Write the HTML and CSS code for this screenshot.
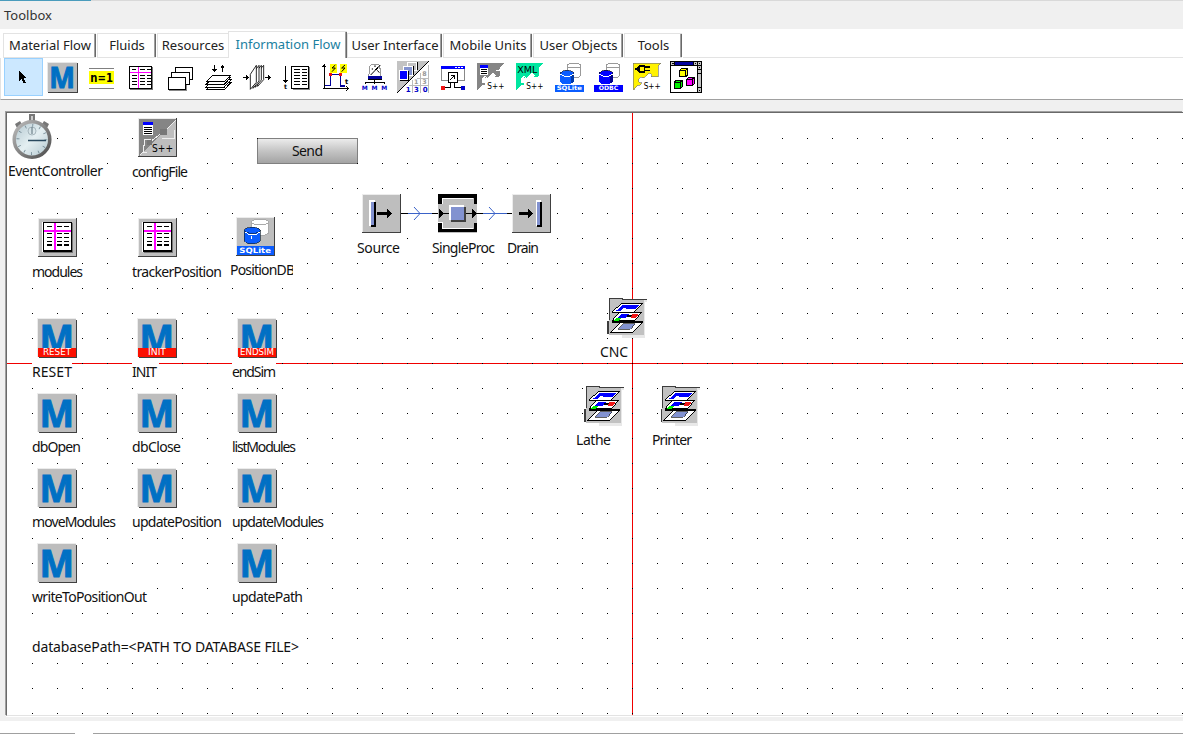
FILE: index.html
```html
<!DOCTYPE html>
<html lang="en">
<head>
<meta charset="utf-8">
<title>Toolbox</title>
<link rel="stylesheet" href="styles.css">
</head>
<body>
<div class="app">
<header class="title">Toolbox</header>
<nav class="tabs">
<div class="tab w93">Material Flow</div><div class="tab w59">Fluids</div><div class="tab w71">Resources</div><div class="tab active">Information Flow</div><div class="tab w95">User Interface</div><div class="tab w89">Mobile Units</div><div class="tab w90">User Objects</div><div class="tab w58">Tools</div><div class="tabfill"></div>
</nav>
<div class="toolbar">
<svg class="tool selected" viewBox="12 174 117 114"><path d="M57 210V243L64 237L71 251L77 248L71 234H80Z"/></svg>
<svg class="tool" viewBox="129 174 117 114"><path fill="#404040" d="M144 189H235V279H144Z"/><path fill="#e8e8e8" d="M141 186H231V276H141Z"/><path fill="#bdbdbd" d="M144 189H231V276H144Z"/><text class="m wide" x="148" y="263" font-size="88" textLength="77" lengthAdjust="spacingAndGlyphs">M</text></svg>
<svg class="tool" viewBox="246 174 117 114"><path fill="#ff0" d="M267 213H342V252H267Z"/><path fill="#808080" d="M267 204H342V207H267ZM267 264H342V267H267Z"/><text class="b" x="271" y="246" font-size="38" textLength="68" lengthAdjust="spacingAndGlyphs">n=1</text></svg>
<svg class="tool" viewBox="363 174 117 114"><path fill="#777" d="M390 201H459V270H390Z"/><path d="M387 198H456V267H387Z"/><path fill="#fff" d="M390 201H453V264H390Z"/><path stroke="#f0f" stroke-width="3" d="M390 217H453M415 201V264"/><path stroke="#000" stroke-width="3" stroke-dasharray="14 6" d="M396 208H408M420 208H452M396 226H410M420 226H452M396 235H410M420 235H452M396 244H410M420 244H452M396 253H410M420 253H452"/></svg>
<svg class="tool" viewBox="480 174 117 114"><path fill="none" stroke="#888" stroke-width="3" d="M508 271H559V256"/><g fill="#fff" stroke="#000" stroke-width="3"><path d="M526 202H577V238H526Z"/><path d="M514 216H568V253H514Z"/><path d="M505 232H556V268H505Z"/></g></svg>
<svg class="tool" viewBox="597 174 117 114"><g fill="#fff" stroke="#000" stroke-width="3"><path d="M619 269L640 247H693L673 269Z"/><path d="M619 261L640 239H693L673 261Z"/><path d="M619 253L640 231H693L673 253Z"/><path d="M619 245L640 225H693L673 245Z"/></g><path d="M642 195H645V207H651L643 216L636 207H642ZM666 216H669V205H675L667 195L660 205H666Z"/></svg>
<svg class="tool" viewBox="9 99 117 114"><path stroke="#000" stroke-width="3" d="M24 157H38M90 157H104"/><path d="M34 149L43 157L34 166ZM100 149L109 157L100 166Z"/><g class="smooth" fill="#fff" stroke="#000" stroke-width="2.500"><path d="M68 184V141L86 121V164Z"/><path d="M61 187V142L79 121V165Z"/><path d="M54 190V144L72 121V168Z"/><path d="M46 193V148L64 121V172Z"/></g></svg>
<svg class="tool" viewBox="126 99 117 114"><path d="M150 123H153V166H159L151 174L144 166H150Z"/><text class="b" x="147" y="191" font-size="19">t</text><path fill="#888" d="M174 126H225V195H174Z"/><path d="M168 123H222V192H168Z"/><path fill="#fff" d="M171 126H219V189H171Z"/><path stroke="#000" stroke-width="3" stroke-dasharray="17 6" d="M177 134H216M177 143H216M177 152H216M177 161H216M177 170H216M177 179H216"/></svg>
<svg class="tool" viewBox="243 99 117 114"><path fill="#ff0" d="M286 117H306V143H286ZM315 117H336V143H315Z"/><path class="smooth" fill="none" stroke="#000" stroke-width="3" d="M301 120L291 129H301L291 140M330 120L320 129H330L320 140"/><path stroke="#000" stroke-width="3" fill="none" d="M268 192V123M265 190H338M262 127L268 120L274 127M334 184L341 190L334 196"/><path fill="none" stroke="#00009c" stroke-width="4" d="M270 181H286V149H316V183H329"/><path fill="#e11" d="M281 144H291V154H281ZM311 144H321V154H311Z"/><text class="b" x="330" y="176" font-size="20">t</text></svg>
<svg class="tool" viewBox="360 99 117 114"><path fill="#fff" stroke="#999" stroke-width="3" d="M401 155L405 122L412 117H429L434 122L438 155Z"/><path class="smooth" stroke="#000" stroke-width="3" d="M407 150L436 120M412 130V134M420 121V126M427 136L433 143"/><path stroke="#000" stroke-width="5" d="M421 135L430 127"/><path fill="#00009c" d="M399 154H440V161H399Z"/><path fill="none" stroke="#000" stroke-width="3" d="M399 164H440M419 164V178M391 178V171H448V178"/><text class="b blue" x="380" y="194" font-size="18" textLength="77">M M M</text></svg>
<svg class="tool" viewBox="477 99 117 114"><path fill="#c3c3c3" d="M486 108H582L486 204Z"/><path stroke="#000" stroke-width="3" d="M486 204L582 108"/><path stroke="#bbb" stroke-width="3" d="M546 160H582M522 180H582M531 165V204M557 144V204M580 120V204"/><g stroke="#fff" stroke-width="3"><path fill="#c3c3c3" d="M516 111H543V135H516Z"/><path fill="#8292d0" d="M504 124H531V150H504Z"/><path fill="#00f" d="M492 136H518V162H492Z"/></g><path fill="none" stroke="#000" stroke-width="3" d="M495 165H521V138M534 150V123M546 135V111"/><g class="b" font-size="19" fill="#999"><text x="562" y="152">8</text><text x="537" y="177">1</text><text x="562" y="177">3</text></g><g class="b blue" font-size="21"><text x="512" y="201">1</text><text x="537" y="201">3</text><text x="563" y="201">0</text></g></svg>
<svg class="tool" viewBox="594 99 117 114"><path fill="#fff" stroke="#888" stroke-width="3" d="M619 124H689V166H619Z"/><path fill="#00f" d="M618 123H690V132H618Z"/><path stroke="#fff" stroke-width="3" d="M661 128H665M670 128H674M679 128H683"/><path fill="#fff" stroke="#000" stroke-width="3" d="M640 143H666V172H640Z"/><path fill="none" stroke="#000" stroke-width="3" d="M646 164L658 151M649 151H659V162M647 173V188H628M659 173V188H678"/><path fill="#e11" d="M618 183H629V194H618Z"/><path fill="#00c" d="M679 183H690V194H679Z"/></svg>
<svg class="tool" viewBox="6 99 117 114"><path fill="#858585" d="M21 114H105L91 128V153L83 157L72 153L76 148L68 145L52 160L43 158L38 163V171L48 174L44 181L38 180L21 198Z"/><path fill="none" stroke="#fff" stroke-width="3" d="M68 145L76 151L70 157H91V134L82 138L77 134M53 160L45 154L36 163V174L43 170L48 176"/><text class="pix" x="52" y="193" font-size="24" textLength="51" lengthAdjust="spacingAndGlyphs">S++</text><path fill="#fff" d="M30 120H54V150H30Z"/><path fill="#00f" d="M30 120H54V129H30Z"/><path stroke="#000" stroke-width="3" d="M34 134H50M34 140H50M34 146H50"/></svg>
<svg class="tool" viewBox="123 99 117 114"><path fill="#00e6a0" d="M138 114H222L208 128V153L200 157L189 153L193 148L185 145L169 160L160 158L155 163V171L165 174L161 181L155 180L138 198Z"/><path fill="none" stroke="#fff" stroke-width="3" d="M185 145L193 151L187 157H208V134M170 160L162 154L153 163V174L160 170L165 176"/><text class="pix" x="142" y="143" font-size="27" textLength="60" lengthAdjust="spacingAndGlyphs">XML</text><text class="pix" x="169" y="193" font-size="24" textLength="51" lengthAdjust="spacingAndGlyphs">S++</text></svg>
<svg class="tool" viewBox="240 99 117 114"><g fill="#fff" stroke="#999" stroke-width="3"><path d="M292 121V149C292 161 332 161 332 149V121"/><ellipse cx="312" cy="122" rx="20" ry="7"/></g><path fill="#0a5cff" d="M270 145V170C275 180 305 180 312 170V145Z"/><path fill="#0039a8" d="M302 145H312V170L302 176Z"/><ellipse cx="291" cy="145" rx="21" ry="9" fill="#0a5cff" stroke="#222" stroke-width="2"/><path fill="none" stroke="#fff" stroke-width="3" d="M271 148Q291 161 311 148"/><path fill="#0a5cff" d="M255 180H342V201H255Z"/><text class="b white" x="260" y="196" font-size="18" textLength="76" lengthAdjust="spacingAndGlyphs">SQLite</text></svg>
<svg class="tool" viewBox="357 99 117 114"><g fill="#fff" stroke="#999" stroke-width="3"><path d="M409 121V149C409 161 449 161 449 149V121"/><ellipse cx="429" cy="122" rx="20" ry="7"/></g><path fill="#00f" d="M387 145V170C392 180 422 180 429 170V145Z"/><path fill="#00008c" d="M419 145H429V170L419 176Z"/><ellipse cx="408" cy="145" rx="21" ry="9" fill="#00f" stroke="#111" stroke-width="2"/><path fill="none" stroke="#fff" stroke-width="3" d="M388 148Q408 161 428 148"/><path fill="#00f" d="M372 180H459V201H372Z"/><text class="b white" x="386" y="196" font-size="18" textLength="59" lengthAdjust="spacingAndGlyphs">ODBC</text></svg>
<svg class="tool" viewBox="474 99 117 114"><path fill="#fff200" stroke="#777" stroke-width="2" d="M490 115H573L564 124V155H543L547 149L539 144L521 159L512 156L506 163V172L515 173L511 181L504 180L490 196Z"/><path d="M508 120H526V144H508L502 138V126ZM526 124H539V128H526ZM526 135H539V139H526ZM496 130H503V134H496Z"/><path fill="#fff200" d="M511 126H521V138H511Z"/><text class="pix" x="521" y="193" font-size="24" textLength="51" lengthAdjust="spacingAndGlyphs">S++</text></svg>
<svg class="tool" viewBox="591 99 117 114"><path d="M600 108H696V204H600Z"/><path fill="#fff" d="M603 123H680V201H603Z"/><path fill="#c3c3c3" d="M603 111H693V120H603ZM683 123H693V201H683Z"/><path fill="#00009c" d="M615 111H669V120H615Z"/><path stroke="#000" stroke-width="3" d="M670 111V120M681 111V201M614 111V120M683 133H693M683 146H693M683 188H693M686 126H691M686 195H691M607 115H611M675 115H679M687 115H691"/><g stroke="#000" stroke-width="3"><path fill="#ff0" d="M629 136L635 130H653V149L647 155H629Z"/><path fill="#0e0" d="M613 172L619 166H637V185L631 191H613Z"/><path fill="#f0f" d="M650 163L656 157H673V176L667 182H650Z"/><path fill="none" d="M629 136H647V155M647 136L653 130M613 172H631V191M631 172L637 166M650 163H667V182M667 163L673 157"/></g></svg>
</div>
<main class="frame">
<svg class="model" viewBox="7 113 1176 602">
<defs>
<pattern id="grid" x="7" y="13" width="25" height="25" patternUnits="userSpaceOnUse"><rect width="1" height="1"/></pattern>
<linearGradient id="btn" x2="0" y2="1"><stop offset="0" stop-color="#ededed"/><stop offset=".5" stop-color="#c4c4c4"/><stop offset="1" stop-color="#a2a2a2"/></linearGradient>
<linearGradient id="dial" x2="1" y2="1"><stop offset="0" stop-color="#b0c5cd"/><stop offset=".5" stop-color="#e4eff2"/><stop offset="1" stop-color="#b0c5cd"/></linearGradient>
<linearGradient id="rim" x2="1" y2="1"><stop offset="0" stop-color="#bdbdbd"/><stop offset="1" stop-color="#4c4c4c"/></linearGradient>
<g id="tile"><path fill="#404040" d="M0 0H39V39H0Z"/><path fill="#ececec" d="M0 0H38V38H0Z"/><path fill="#bebebe" d="M1 1H38V38H1Z"/></g>
<g id="method"><path fill="#404040" d="M2 2H40V40H2Z"/><path fill="#ececec" d="M0 0H39V39H0Z"/><path fill="#bdbdbd" d="M1 1H39V39H1Z"/><text class="m" x="2.500" y="33.500" font-size="38" textLength="34.500" lengthAdjust="spacingAndGlyphs">M</text></g>
<g id="table"><use href="#tile"/><g transform="scale(.33333)"><path fill="#fff" d="M12 11H102V101H12Z"/><path fill="#777" d="M17 16H105V104H17Z"/><path d="M14 13H102V101H14Z"/><path fill="#fff" d="M17 16H99V95H17Z"/><path stroke="#f0f" stroke-width="6" d="M17 38H99M51 16V95"/><path stroke="#000" stroke-width="3" d="M27 27H42M57 27H72M78 27H93M27 48H42M57 48H72M78 48H93M27 60H42M57 60H72M78 60H93M27 71H42M57 71H72M78 71H93"/><path stroke="#000" stroke-width="6" d="M27 82H42M57 82H72M78 82H93"/></g></g>
<g id="layers" transform="scale(.33333)"><path fill="#e8e8e8" d="M40 8H119V14H113V122H46V114H40Z"/><path fill="#c1c1c1" d="M8 5H44V9H110V113H5V64H8Z"/><path fill="none" stroke="#3c3c3c" stroke-width="3" d="M8 70V4H46V9H120"/><path stroke="#3c3c3c" stroke-width="5" d="M4 112V71"/>
<path fill="#fff" stroke="#000" stroke-width="3" d="M10 106L41 76H107L78 106Z"/><path fill="#8292d0" stroke="#111" stroke-width="2" d="M33 97L48 81H85L70 97Z"/><path stroke="#000" stroke-width="4" d="M14 75H107"/>
<path fill="#fff" stroke="#000" stroke-width="3" d="M14 72L38 46H104L82 72Z"/><path fill="#00f" d="M43 51H67L57 62H34Z"/><path d="M62 54H80V61H58Z"/><path fill="#f01818" d="M77 51H95L86 63H70Z"/><path fill="#0e0" d="M30 63H44L36 71H22Z"/>
<path fill="#fff" stroke="#000" stroke-width="3" d="M15 46L43 19H108L81 46Z"/><path fill="#00f" d="M46 24H96L84 37H54L60 32H52L42 41H28Z"/></g>
</defs>
<path stroke="#f00000" d="M632.5 113V715M7 363.5H1183"/>
<rect x="8" y="114" width="1175" height="601" fill="url(#grid)"/>
<g fill="#fff">
<path d="M8 113H54V160H8ZM8 161H104V181H8ZM132 162H188V182H132ZM32 262H82V282H32ZM132 262H222V282H132ZM230 260H294V280H230ZM357 238H401V258H357ZM432 238H496V258H432ZM507 238H540V258H507ZM32 362H72V382H32ZM132 362H159V382H132ZM232 362H276V382H232ZM32 437H82V457H32ZM132 437H181V457H132ZM232 437H297V457H232ZM32 512H116V532H32ZM132 512H222V532H132ZM232 512H325V532H232ZM32 587H148V607H32ZM232 587H304V607H232ZM32 637H300V657H32ZM600 342H628V362H600ZM576 430H611V450H576ZM652 430H693V450H652Z"/></g>
<g class="smooth">
<path fill="#777" d="M29 114H35V122H29ZM15 124L20 121L23 126L18 130ZM49 124L44 121L41 126L46 130Z"/><path fill="#c9c9c9" d="M31 116H33V122H31Z"/>
<circle cx="32" cy="139.500" r="17.800" fill="url(#dial)" stroke="url(#rim)" stroke-width="3.500"/><circle cx="32" cy="139.500" r="14" fill="none" stroke="#6f8590" stroke-width="3" stroke-dasharray=".8 6.530"/><circle cx="32" cy="131" r="4" fill="none" stroke="#9aabb3" stroke-width=".8"/><path stroke="#29485e" stroke-width="1.500" d="M28 140.500H46"/><path stroke="#5a6e78" d="M32 127V134"/>
</g>
<g transform="translate(138 118)"><use href="#tile"/><path fill="#858585" d="M1 1H38L1 38Z"/><path fill="none" stroke="#eee" d="M38 2L29 11M36 12V20H24M24 14L20 18L12 24M5 27V34H9M12 24V21H6V28M6 33L2 37"/><path fill="#777" d="M22 11H29V17H22ZM9 22H14V27H9Z"/><path fill="#fff" d="M5 4H15V17H5Z"/><path fill="#00f" d="M5 4H15V7H5Z"/><path stroke="#000" d="M6 9.500H14M6 11.500H14M6 13.500H14M6 15.500H14"/><text class="pix" x="14" y="34" font-size="10" textLength="21" lengthAdjust="spacingAndGlyphs">S++</text></g>
<use href="#table" x="38" y="218"/><use href="#table" x="138" y="218"/>
<g transform="translate(236 217)"><use href="#tile"/><g transform="scale(.33333)"><g fill="#fff" stroke="#aaa" stroke-width="3"><path d="M46 15V45C46 59 99 59 99 45V15"/><ellipse cx="72" cy="15" rx="27" ry="8"/></g><path fill="#0a5cff" stroke="#123" stroke-width="2" d="M25 40V72C32 84 62 84 73 72V40Z"/><ellipse cx="49" cy="40" rx="24" ry="9" fill="#0a5cff" stroke="#123" stroke-width="2"/><path fill="none" stroke="#fff" stroke-width="3" d="M26 45Q49 62 73 45M47 58V66"/><path fill="#0a5cff" d="M3 87H114V114H3Z"/><text class="b white" x="10" y="107" font-size="22" textLength="95" lengthAdjust="spacingAndGlyphs">SQLite</text></g></g>
<path stroke="#000" d="M401 213.500H438M476 213.500H512"/><path class="smooth" fill="none" stroke="#3a62c8" d="M408 213.500H432M414 207L420 213.500L414 220M483 213.500H507M489 207L495 213.500L489 220"/>
<g transform="translate(362 194)"><use href="#tile"/><path fill="#fff" d="M7 6H13V32H7Z"/><path d="M9 8H14V33H9Z"/><path fill="#8292d0" d="M9 8H12V31H9Z"/><path d="M15 18H25V14L30 19.500L25 25V21H15Z"/></g>
<g transform="translate(438 194)"><path fill="#bebebe" d="M0 0H39V39H0Z"/><path d="M0 0H39V10H36V4H4V10H0ZM0 29H4V35H36V29H39V38H0Z"/><path fill="none" stroke="#fff" d="M4.500 10V4.500H35M0 28.500H4.500V34.500H35"/><path fill="#fff" d="M11 11H26V26H11Z"/><path fill="#404040" d="M13 13H28V28H13Z"/><path fill="#8292d0" d="M13 13H26V26H13Z"/><path d="M1 15L6 19.500L1 24ZM34 15L39 19.500L34 24ZM5 19H11V20H5ZM28 19H34V20H28Z"/></g>
<g transform="translate(512 194)"><use href="#tile"/><path d="M7 18H16V14L21 19.500L16 25V21H7Z"/><path fill="#fff" d="M24 6H29V32H24Z"/><path d="M25 8H30V33H25Z"/><path fill="#8292d0" d="M25 8H28V31H25Z"/></g>
<use href="#method" x="37" y="318"/><use href="#method" x="137" y="318"/><use href="#method" x="237" y="318"/>
<use href="#method" x="37" y="393"/><use href="#method" x="137" y="393"/><use href="#method" x="237" y="393"/>
<use href="#method" x="37" y="468"/><use href="#method" x="137" y="468"/><use href="#method" x="237" y="468"/>
<use href="#method" x="37" y="543"/><use href="#method" x="237" y="543"/>
<path fill="#fb1000" d="M38 348H76V357H38ZM138 348H176V357H138ZM238 348H276V357H238Z"/>
<g class="tag"><text x="43" y="355" textLength="28" lengthAdjust="spacingAndGlyphs">RESET</text><text x="148" y="355" textLength="18" lengthAdjust="spacingAndGlyphs">INIT</text><text x="240" y="355" textLength="34" lengthAdjust="spacingAndGlyphs">ENDSIM</text></g>
<use href="#layers" x="607" y="297"/><use href="#layers" x="584" y="385"/><use href="#layers" x="660" y="385"/>
<rect x="257.500" y="138.500" width="100" height="25" rx="1.500" fill="url(#btn)" stroke="#808080"/>
<g class="labels">
<text x="292" y="156" textLength="31">Send</text>
<text x="8" y="176" textLength="95">EventController</text><text x="132" y="177" textLength="56">configFile</text>
<text x="32" y="277" textLength="51">modules</text><text x="132" y="277" textLength="90">trackerPosition</text><text x="230" y="275" textLength="65">PositionDB</text>
<text x="357" y="253" textLength="43">Source</text><text x="432" y="253" textLength="63">SingleProc</text><text x="507" y="253" textLength="32">Drain</text>
<text x="32" y="377" textLength="40">RESET</text><text x="132" y="377" textLength="25">INIT</text><text x="232" y="377" textLength="44">endSim</text>
<text x="32" y="452" textLength="49">dbOpen</text><text x="132" y="452" textLength="49">dbClose</text><text x="232" y="452" textLength="64">listModules</text>
<text x="32" y="527" textLength="84">moveModules</text><text x="132" y="527" textLength="90">updatePosition</text><text x="232" y="527" textLength="92">updateModules</text>
<text x="32" y="602" textLength="115">writeToPositionOut</text><text x="232" y="602" textLength="71">updatePath</text>
<text x="32" y="652" textLength="267">databasePath=&lt;PATH TO DATABASE FILE&gt;</text>
<text x="600" y="357" textLength="28">CNC</text><text x="576" y="445" textLength="35">Lathe</text><text x="652" y="445" textLength="40">Printer</text>
</g>
<path fill="#fff" d="M293 264H298V277H293Z"/>
</svg>
</main>
<footer class="bottom"><div class="left-rule"></div><div class="right-rule"></div></footer>
</div>
</body>
</html>
```
FILE: styles.css
```css
body { margin: 0; overflow: hidden; background: #fff; font-family: "Noto Sans", sans-serif; }
.app { display: flex; flex-direction: column; width: 1183px; height: 734px; }
.title { box-sizing: border-box; height: 29px; padding: 6px 0 0 4px; background: linear-gradient(90deg, #4a9cbc 91px, #d9d9d9 91px) top / 100% 1px no-repeat #f0f0f0; font-size: 13px; line-height: 18px; color: #333; }
.tabs { display: flex; align-items: flex-end; box-sizing: border-box; height: 29px; padding-left: 3px; background: #fff; }
.tab { flex: none; box-sizing: border-box; height: 25px; padding-top: 2px; border-top: 1px solid #e3e3e3; border-left: 1px solid #e3e3e3; border-bottom: 1px solid #e3e3e3; font-size: 13px; line-height: 18px; text-align: center; white-space: nowrap; color: #222; background: linear-gradient(90deg, #a0a0a0 50%, #696969 50%) right / 2px 100% no-repeat; margin-right: 1px; }
.w93 { width: 93px; }
.w59 { width: 59px; }
.w71 { width: 71px; margin-right: 0; background: none; }
.w95 { width: 95px; }
.w89 { width: 89px; }
.w90 { width: 90px; }
.w58 { width: 58px; }
.active { width: 119px; height: 27px; padding-top: 3px; border-bottom: 0; margin-right: 0; color: #1b7f9f; }
.tabfill { flex: 1; border-bottom: 1px solid #e3e3e3; }
.toolbar { display: flex; box-sizing: border-box; height: 42px; padding-left: 3px; border-left: 1px solid #e3e3e3; border-bottom: 1px solid #a0a0a0; background: #fff; }
.tool { width: 39px; height: 38px; flex: none; overflow: visible; shape-rendering: crispEdges; }
.selected { background: #cce8ff; box-shadow: inset 0 0 0 1px #99d1ff; }
.frame { flex: 1; display: flex; box-sizing: border-box; height: 621px; padding: 11px 0 4px 5px; background: #f0f0f0; }
.model { display: block; box-sizing: content-box; width: 1176px; height: 602px; flex: none; border: solid #696969; border-width: 1px 0 0 1px; box-shadow: -1px -1px #a0a0a0, 0 1px #fff; margin: 1px 0 0 1px; border-bottom: 1px solid #e3e3e3; background: #fff; shape-rendering: crispEdges; }
.smooth { shape-rendering: auto; }
.labels { font-size: 14px; fill: #111; }
.m { font-family: "Noto Sans", sans-serif; font-weight: 700; fill: #0070c4; stroke: #0070c4; stroke-width: 1px; }
.wide { stroke-width: 3px; }
.b { font-family: "DejaVu Sans", sans-serif; font-weight: 700; }
.blue { fill: #0000c8; }
.white { fill: #fff; }
.pix { font-family: "DejaVu Sans", sans-serif; }
.tag { font: 8px "DejaVu Sans", sans-serif; fill: #fff; }
.bottom { display: flex; gap: 18px; align-items: flex-end; height: 13px; background: #fff; }
.left-rule { width: 75px; height: 1px; background: #a0a0a0; }
.right-rule { flex: 1; height: 1px; background: #a0a0a0; }
```
